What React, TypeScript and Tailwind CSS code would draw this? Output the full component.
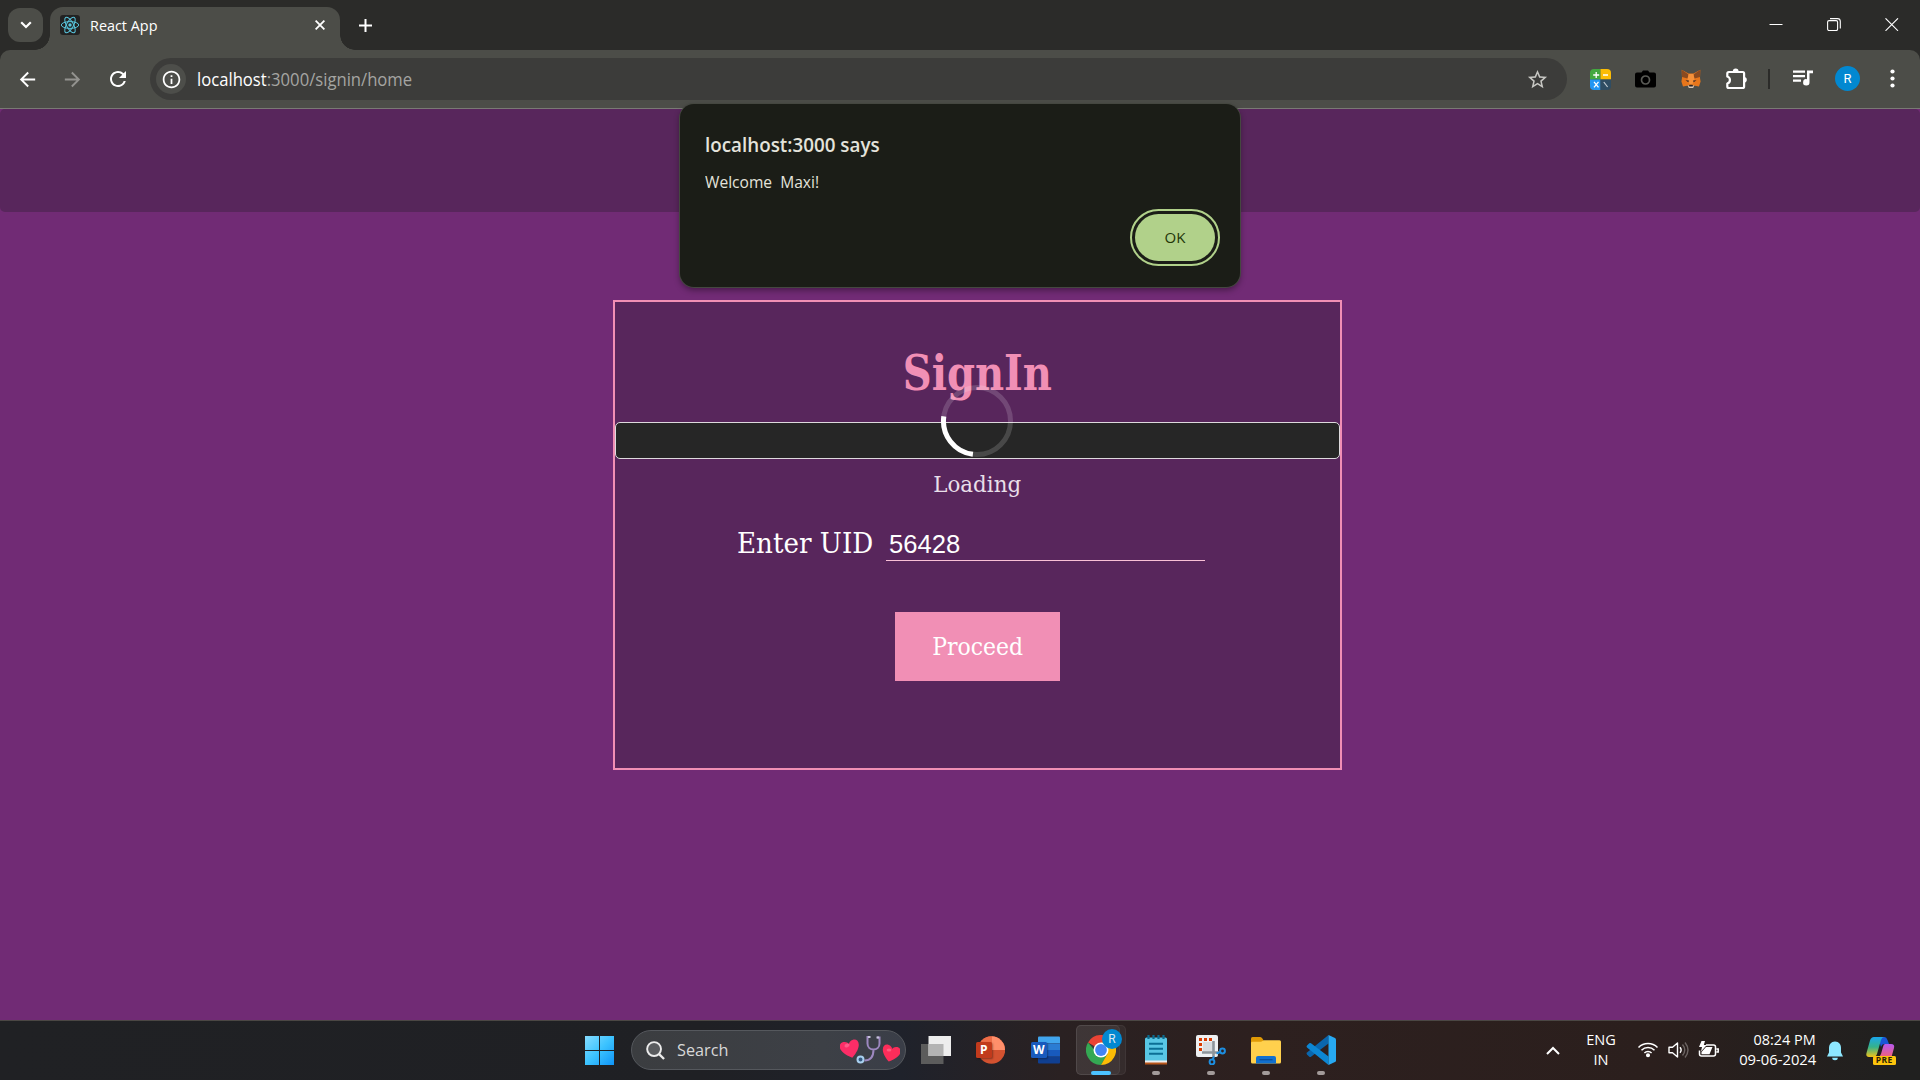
import type { ReactNode } from "react";
import { MdArrowBack, MdArrowForward, MdRefresh, MdInfoOutline, MdStarBorder } from "react-icons/md";

function ToolCell({ children }: { children: ReactNode }) {
  return <div className="flex w-[45px] shrink-0 items-center justify-center">{children}</div>;
}

function ReactLogo() {
  return (
    <svg width="20" height="20" viewBox="0 0 20 20" className="rounded-[3px] bg-[#222]" fill="none" stroke="#58c4dc" strokeWidth="1">
      <ellipse cx="10" cy="10" rx="8.7" ry="3.4" />
      <ellipse cx="10" cy="10" rx="8.7" ry="3.4" transform="rotate(60 10 10)" />
      <ellipse cx="10" cy="10" rx="8.7" ry="3.4" transform="rotate(120 10 10)" />
      <circle cx="10" cy="10" r="1.7" fill="#58c4dc" stroke="none" />
    </svg>
  );
}

function TabStrip() {
  return (
    <div className="flex h-[50px] bg-[#2b2b29]">
      <div className="mt-2 ml-2 flex h-[34px] w-[35px] items-center justify-center rounded-xl bg-[#4c4d48]">
        <svg width="12" height="8" viewBox="0 0 12 8" fill="none" stroke="#fff" strokeWidth="2.2">
          <path d="M1.2 1.2 6 6l4.800-4.800" />
        </svg>
      </div>
      <div className="relative mt-[7px] ml-[7px] flex w-[290px] items-center rounded-t-[13px] bg-[#4c4d48] pb-[7px] pl-[10px]">
        <span className="absolute bottom-0 -left-[15px] size-[15px] bg-[radial-gradient(circle_at_0_0,transparent_14.5px,#4c4d48_15px)]" />
        <span className="absolute -right-[15px] bottom-0 size-[15px] bg-[radial-gradient(circle_at_100%_0,transparent_14.5px,#4c4d48_15px)]" />
        <ReactLogo />
        <span className="ml-[10px] origin-left scale-x-[0.96] text-[15px] leading-5 text-white">React App</span>
        <svg className="mr-[15px] ml-auto" width="10" height="10" viewBox="0 0 10 10" stroke="#fff" strokeWidth="1.8">
          <path d="M.6.6l8.800 8.800M9.400.6.6 9.400" />
        </svg>
      </div>
      <svg className="mt-[19px] ml-[19px]" width="13" height="13" viewBox="0 0 13 13" stroke="#fff" strokeWidth="2">
        <path d="M0 6.500h13M6.500 0v13" />
      </svg>
      <div className="mt-[18px] mr-[21px] ml-auto flex gap-[44px]">
        <svg width="14" height="13" viewBox="0 0 14 13" stroke="#fff">
          <path d="M.5 6.500h13" />
        </svg>
        <svg width="14" height="13" viewBox="0 0 14 13" fill="none" stroke="#fff" strokeWidth="1.100">
          <rect x=".6" y="2.600" width="10" height="10" rx="1.500" />
          <path d="M3 .6h7.500a2.800 2.800 0 0 1 2.800 2.800v7" />
        </svg>
        <svg width="14" height="13" viewBox="0 0 14 13" stroke="#fff" strokeWidth="1.100">
          <path d="M.5.300l12.500 12.500M13 .300.5 12.800" />
        </svg>
      </div>
    </div>
  );
}

function CalculatorIcon() {
  return (
    <svg width="21" height="21" viewBox="0 0 21 21" className="rounded-[4px]">
      <path fill="#43a83f" d="M0 0h10.500v10.500H0z" />
      <path fill="#fbbc05" d="M10.500 0H21v10.500H10.500z" />
      <path fill="#2196f3" d="M0 10.500h10.500V21H0z" />
      <path fill="#2f4d63" d="M10.500 10.500H21V21H10.500z" />
      <path stroke="#fff" strokeWidth="1.300" d="M3.200 6h6M6.200 3v6M13 6h5M4 12.800l4.500 5.500M8.500 12.800 4 18.300" />
      <path stroke="#c3ccd3" strokeWidth="1.200" d="m13.800 13 3.800 5" />
    </svg>
  );
}

function CameraIcon() {
  return (
    <svg width="21" height="18" viewBox="0 0 21 18">
      <path d="M6.500 2.500 8 .500h5l1.500 2H19a2 2 0 0 1 2 2v11a2 2 0 0 1-2 2H2a2 2 0 0 1-2-2v-11a2 2 0 0 1 2-2z" />
      <circle cx="10.500" cy="10" r="4" fill="none" stroke="#5a5b56" strokeWidth="1.700" />
    </svg>
  );
}

function FoxIcon() {
  return (
    <svg width="20" height="20" viewBox="0 0 20 20">
      <path fill="#e8761b" d="M.7.800 7.500 4.500h5L19.300.800 19 9l.600 3.500-1.600 5-5.500-1-1.200 2H8.700l-1.200-2-5.500 1-1.600-5L1 9z" />
      <path fill="#8a4a20" d="M.7.800 7.600 5.500 6.500 9.500 1 8zM19.300.800l-6.900 4.700 1.100 4L19 8z" />
      <path fill="#f5913a" d="M7.600 5h4.800l1.100 5.500-2.200 5H8.700l-2.200-5z" />
      <path fill="#3c2a28" d="m4.500 11.200 3.500.300-.700 1.700zM15.500 11.200l-3.500.300.700 1.700zM8.500 16h3l.5 1.700H8z" />
      <path fill="#d9c7b6" d="m6.500 15.800 1.600 1.200h3.800l1.600-1.200-1.300 3.200H7.800z" />
      <path fill="#2b2322" d="M8.600 15.700h2.800l.4 1.800H8.200z" />
    </svg>
  );
}

function Toolbar() {
  return (
    <div className="bg-[#2b2b29]">
      <div className="flex h-[59px] items-center rounded-t-[10px] border-b border-[#797a74] bg-[#4c4d48] pl-[5px]">
        <ToolCell><MdArrowBack size={23} color="#fff" /></ToolCell>
        <ToolCell><MdArrowForward size={23} color="#93938f" /></ToolCell>
        <ToolCell><MdRefresh size={24} color="#fff" className="mb-px" /></ToolCell>
        <div className="ml-[10px] flex h-[42px] w-[1417px] items-center rounded-full bg-[#3c3c3a] pl-1.5">
          <div className="flex size-[30px] items-center justify-center rounded-full bg-[#4d4e4a]">
            <MdInfoOutline size={21} color="#fff" />
          </div>
          <span className="ml-[10.500px] origin-left scale-x-[0.951] text-[17.5px] leading-6 text-[#a5a5a2]">
            <span className="text-white">localhost</span>:3000/signin/home
          </span>
          <MdStarBorder className="mr-[18px] ml-auto" size={23} color="#c7c7c3" />
        </div>
        <div className="w-[11px]" />
        <ToolCell><CalculatorIcon /></ToolCell>
        <ToolCell><CameraIcon /></ToolCell>
        <ToolCell><FoxIcon /></ToolCell>
        <ToolCell>
          <svg width="22" height="22" viewBox="0 0 22 22" fill="none" stroke="#fff" strokeWidth="2.200" strokeLinejoin="round" className="mb-px">
            <path d="M2.300 5.500q0-1.500 1.500-1.500h14q1.300 0 1.300 1.500V18.500q0 1.500-1.500 1.500H3.800q-1.500 0-1.500-1.500V15.500C5.800 14.500 5.800 9.500 2.300 8.500z" />
            <path fill="#fff" stroke="none" d="M7.800 3.500a2.900 2.900 0 0 1 5.800 0zM19 9a2.800 2.800 0 0 1 0 5.600z" />
          </svg>
        </ToolCell>
        <div className="flex w-[22px] justify-center"><div className="h-5 w-0.5 bg-[#2b2b29]" /></div>
        <ToolCell>
          <svg width="20" height="16" viewBox="0 0 20 16" fill="#fff" className="mb-0.5">
            <path d="M0 .500h12v2.200H0zM0 5h12v2.200H0zM0 9.500h8v2.200H0zM14 .500h6v2.700h-3.500v9a3.200 3.200 0 1 1-2.500-3z" />
          </svg>
        </ToolCell>
        <ToolCell>
          <div className="mb-px flex size-[25px] items-center justify-center rounded-full bg-[#0288d1] font-['Roboto'] text-[13px] leading-none text-white">R</div>
        </ToolCell>
        <ToolCell>
          <svg width="5" height="19" viewBox="0 0 5 19" fill="#fff" className="mb-px">
            <circle cx="2.500" cy="2.500" r="2.100" /><circle cx="2.500" cy="9.500" r="2.100" /><circle cx="2.500" cy="16.500" r="2.100" />
          </svg>
        </ToolCell>
      </div>
    </div>
  );
}

function AlertDialog() {
  return (
    <div className="absolute top-[104px] left-[680px] h-[183px] w-[560px] rounded-[14px] bg-[#1b1d17] pt-7 pl-[25px] text-[#e4e3db] shadow-[0_3px_6px_rgba(0,0,0,0.4)] ring-1 ring-[#454740]">
      <div className="origin-left scale-x-[0.99] text-[19px] leading-[26px] font-semibold">localhost:3000 says</div>
      <div className="mt-[14px] origin-left scale-x-[1.005] text-[15.5px] leading-5 whitespace-pre">Welcome  Maxi!</div>
      <button className="absolute top-[110px] left-[455px] flex h-[47px] w-20 items-center justify-center rounded-full bg-[#b1d18a] text-[15px] font-medium text-[#233608] outline-2 outline-offset-[3px] outline-[#b1d18a]">
        OK
      </button>
    </div>
  );
}

function Spinner() {
  return (
    <svg className="absolute -top-[39px] left-[324px]" width="74" height="74" viewBox="-37 -37 74 74" fill="none" strokeWidth="5">
      <circle r="33.500" stroke="#fff" strokeOpacity="0.16" />
      <path d="M-33.200-4.600A33.500 33.500 0 0 0-4.100 33.250" stroke="#fff" />
    </svg>
  );
}

function SignInCard() {
  return (
    <div className="mt-[88px] ml-[613px] flex h-[470px] w-[729px] flex-col items-center border-2 border-[#f18fb5] bg-[#58265c] font-['DejaVu_Serif',serif] text-white">
      <h1 className="mt-[41px] scale-x-[0.835] text-[48px] leading-[60px] font-bold text-[#f18fb5]">SignIn</h1>
      <div className="relative mt-[19px] h-[37px] w-full rounded-[5px] border border-[#ddd9dd] bg-[#262626]">
        <Spinner />
      </div>
      <div className="mt-[10px] scale-x-[0.95] text-[22.5px] leading-[30px] text-[#e8dfe9]">Loading</div>
      <div className="mt-[26px] flex w-full">
        <label className="ml-[122px] w-[149px] origin-left scale-x-[0.97] pt-px text-[27px] leading-9 whitespace-nowrap">Enter UID</label>
        <div className="h-9 w-[319px] border-b border-[#f9c0d6] pl-[3px] font-['Liberation_Sans',sans-serif] text-[25.6px] leading-[38px]">56428</div>
      </div>
      <div className="mt-[50px] flex h-[69px] w-[165px] items-center justify-center bg-[#f18fb5] pt-[3px] text-[23.5px]">
        <span className="scale-x-[0.935]">Proceed</span>
      </div>
    </div>
  );
}

function WindowsLogo() {
  return (
    <svg width="29" height="29" viewBox="0 0 29 29">
      <defs>
        <linearGradient id="win" x1="0" y1="0" x2="1" y2="1" gradientUnits="objectBoundingBox">
          <stop offset="0" stopColor="#86dcff" /><stop offset=".5" stopColor="#3cc3ff" /><stop offset="1" stopColor="#0f94f7" />
        </linearGradient>
      </defs>
      <path fill="url(#win)" d="M0 0h14v14H0zM15 0h14v14H15zM0 15h14v14H0zM15 15h14v14H15z" />
    </svg>
  );
}

function SearchDecoration() {
  return (
    <svg width="60" height="30" viewBox="0 0 60 30" className="mr-[5px] ml-auto" fill="none">
      <path transform="translate(10 13.500) rotate(-14) scale(1.120)" fill="#fc2d67" d="M0 8.500C-12 0-9.500-7-4.500-7 -1.800-7 0-4.800 0-4 0-4.800 1.800-7 4.500-7 9.500-7 12 0 0 8.500z" />
      <path transform="translate(51 18) rotate(15) scale(1.050)" fill="#fc2d5a" d="M0 8.500C-12 0-9.500-7-4.500-7 -1.800-7 0-4.800 0-4 0-4.800 1.800-7 4.500-7 9.500-7 12 0 0 8.500z" />
      <ellipse cx="7" cy="10.500" rx="2.600" ry="1.800" fill="#ff7aa0" opacity=".6" transform="rotate(-20 7 10.500)" />
      <ellipse cx="49" cy="15" rx="2.400" ry="1.600" fill="#ff7a95" opacity=".6" />
      <path stroke="#9d88c0" strokeWidth="2" d="M30 2h-2.500v6.500c0 8 12 8 12 0V2.500H37M33.500 14.500c0 7-2.500 11-9 11" />
      <path stroke="#c5c1da" strokeWidth="2.200" d="M28 2h2.500M36.500 2.500H39" />
      <circle cx="20.500" cy="24.500" r="3" fill="#355a80" stroke="#a9d0ef" strokeWidth="2" />
    </svg>
  );
}

function TaskSlot({ children, running }: { children: ReactNode; running?: boolean }) {
  return (
    <div className="relative flex h-[59px] w-[55px] items-center justify-center">
      {children}
      {running && <span className="absolute bottom-[5px] left-6 h-1 w-2 rounded-full bg-[#a39b9a]" />}
    </div>
  );
}

function OfficeBadge({ letter, tone }: { letter: string; tone: "red" | "blue" }) {
  return (
    <span className={`absolute top-[21px] left-[13px] flex size-[15.5px] items-center justify-center rounded-[1.500px] text-[12px] leading-none font-bold text-white shadow-[1px_1px_2px_rgba(0,0,0,0.35)] ${tone === "red" ? "bg-[#c13a1c]" : "bg-[#185abd]"}`}>
      {letter}
    </span>
  );
}

function Taskbar() {
  return (
    <div className="flex h-[60px] items-center border-t border-[#4b4744] bg-[linear-gradient(90deg,#202124_0px,#1f2024_700px,#1f222b_900px,#2a2122_1060px,#2d201f_1250px,#2b1f1d_1650px,#20201f_1900px)]">
      <div className="w-[585px]" />
      <WindowsLogo />
      <div className="mb-px ml-[17px] flex h-10 w-[275px] items-center rounded-full border border-[#55585d] bg-[linear-gradient(90deg,#3b3d40,#3d4046_70%,#3a3e48)] pl-[14px]">
        <svg width="19" height="19" viewBox="0 0 20 20" fill="none" stroke="#ececec" strokeWidth="2">
          <circle cx="8.500" cy="8.500" r="7.300" fill="#5a5c5f" /><path d="m13.800 13.800 5.200 5.200" strokeWidth="2.400" />
        </svg>
        <span className="ml-3 origin-left scale-x-[0.955] text-[17px] text-[#d8d8d8]">Search</span>
        <SearchDecoration />
      </div>
      <div className="ml-[2px] flex">
        <TaskSlot>
          <svg width="30" height="28" viewBox="0 0 30 28" className="mb-px">
            <path fill="#5c5c5c" d="M0 8h22.500v20H0z" /><path fill="#ededed" d="M7.500 0H30v20H7.500z" /><path fill="#b3b3b3" d="M7.500 8h15v12h-15z" />
          </svg>
        </TaskSlot>
        <TaskSlot>
          <svg width="29" height="28" viewBox="0 0 29 28" className="mb-px">
            <circle cx="15.500" cy="14" r="13.700" fill="#d35230" /><path fill="#ff8f6b" d="M15.500.3A13.700 13.700 0 0 1 29 14H15.500z" /><path fill="#ed6c47" d="M15.500.3A13.700 13.700 0 0 0 1.800 14h13.700z" />
          </svg>
          <OfficeBadge letter="P" tone="red" />
        </TaskSlot>
        <TaskSlot>
          <svg width="29" height="28" viewBox="0 0 29 28" className="mb-px">
            <path fill="#41a5ee" d="M7 1.500Q7 .500 8 .500h20q1 0 1 1V7.300H7z" /><path fill="#2b7cd3" d="M7 7.300h22V14H7z" /><path fill="#185abd" d="M7 14h22v6.700H7z" /><path fill="#103f91" d="M7 20.700h22v5.800q0 1-1 1H8q-1 0-1-1z" />
          </svg>
          <OfficeBadge letter="W" tone="blue" />
        </TaskSlot>
        <TaskSlot>
          <span className="absolute top-1 left-[3px] h-[50px] w-[50px] rounded-[5px] border border-white/5 bg-white/5" />
          <span className="absolute top-1 left-[3px] h-[50px] w-[44px] rounded-[5px] border border-white/5 bg-white/5" />
          <svg className="absolute top-[14px] left-[13px]" width="30" height="30" viewBox="0 0 30 30">
            <path fill="#ea4335" d="M15 15 2 7.500a15 15 0 0 1 26 0z" />
            <path fill="#34a853" d="M15 22.500 2 7.500A15 15 0 0 0 15 30l6.500-11z" />
            <path fill="#fbbc05" d="M15 7.500h13A15 15 0 0 1 15 30l6.500-11.300z" />
            <circle cx="15" cy="15" r="7.500" fill="#fff" /><circle cx="15" cy="15" r="5.900" fill="#4285f4" />
          </svg>
          <span className="absolute top-[8px] left-[29px] flex size-5 items-center justify-center rounded-full bg-[#0288d1] font-['Roboto'] text-[12px] leading-none text-[#dbe9f3]">R</span>
          <span className="absolute bottom-[5px] left-[18px] h-1 w-5 rounded-full bg-[#4cc2ff]" />
        </TaskSlot>
        <TaskSlot running>
          <svg width="22" height="30" viewBox="0 0 22 30" className="mb-px">
            <path fill="#b8561b" d="M0 26h22v3.500H0z" /><path fill="#eceff0" d="M0 22h22v5.500H0z" /><path fill="#58c6e4" d="M0 4q0-1.500 1.500-1.500h19Q22 2.500 22 4v21.500H0z" />
            <path stroke="#0b6f95" strokeWidth="2" d="M4 8.800h14M4 13.800h14M4 18.800h14" /><path stroke="#0a6c90" strokeWidth="2.200" d="M3.500 0v4M8.500 0v4M13.500 0v4M18.500 0v4" />
          </svg>
        </TaskSlot>
        <TaskSlot running>
          <svg width="30" height="30" viewBox="0 0 30 30" fill="none" className="mb-px">
            <rect width="22" height="22" rx="2" fill="#eef0f2" /><path fill="#d9dcdf" d="M7 7h11v11H7z" />
            <path stroke="#d83b01" strokeWidth="3" strokeDasharray="3 2" d="M3 4.500h13M4.500 8v10" />
            <path stroke="#8e959b" strokeWidth="2.600" d="M17.500 6v16M6 17.500h17" />
            <circle cx="26.500" cy="16" r="2.400" stroke="#1d8ee0" strokeWidth="2" /><circle cx="16" cy="27" r="2.400" stroke="#1d8ee0" strokeWidth="2" />
            <path stroke="#1d8ee0" strokeWidth="2" d="m20.500 18.500 4-1.500M18 21.500l-1.500 3.500" />
          </svg>
        </TaskSlot>
        <TaskSlot running>
          <svg width="30" height="27" viewBox="0 0 30 27">
            <path fill="#e09a06" d="M0 1.500Q0 0 1.500 0H9q1 0 2 1l2 3v4H0z" /><path fill="#ffd04d" d="M0 6q0-1.200 1.200-1.200H10L13 3.200h15.500Q30 3.200 30 4.700V25q0 1.500-1.500 1.500h-27Q0 26.500 0 25z" />
            <path fill="#1170cf" d="M5 26.500V21q0-2 2-2h16q2 0 2 2v5.500z" /><path stroke="#0a4f9b" strokeWidth="1.300" d="M8.500 22.700h13" />
          </svg>
        </TaskSlot>
        <TaskSlot running>
          <svg width="30" height="30" viewBox="0 0 30 30" className="mb-px">
            <path fill="#0a66ad" d="m1 19.500 2.300 2.300q.8.600 1.700 0L22.500 8.500V0L1 17.500q-1 1 0 2z" />
            <path fill="#0c86d3" d="m1 10.500 2.300-2.300q.8-.6 1.700 0L22.500 21.500V30L1 12.500q-1-1 0-2z" />
            <path fill="#27a9f2" d="M22.500 0 29 3q1 .5 1 1.500v21q0 1-1 1.500l-6.500 3z" />
          </svg>
        </TaskSlot>
      </div>
      <div className="mb-[3px] ml-auto flex w-[390px] items-center text-[15px] leading-5 text-white">
        <div className="flex w-[46px] justify-center">
          <svg width="14" height="9" viewBox="0 0 14 9" fill="none" stroke="#fff" strokeWidth="2" className="mt-[3px]"><path d="m1 8 6-6 6 6" /></svg>
        </div>
        <div className="flex w-[50px] scale-x-[0.97] flex-col items-center"><span>ENG</span><span>IN</span></div>
        <div className="mt-px ml-[11px] flex w-[82px] items-center justify-between">
          <svg width="22" height="17" viewBox="0 0 22 17" fill="none" stroke="#fff" strokeWidth="1.500">
            <path d="M1.500 6.500a13.400 13.400 0 0 1 19 0M4.500 9.300a9.200 9.200 0 0 1 13 0M7.400 12a5.100 5.100 0 0 1 7.200 0" /><circle cx="11" cy="14.300" r="1.300" fill="#fff" />
          </svg>
          <svg width="21" height="18" viewBox="0 0 21 18" fill="none" stroke="#fff" strokeWidth="1.400">
            <path d="M1 6.200h3.500L9.500 2v14l-5-4.200H1z" strokeLinejoin="round" /><path d="M12 6.200q2.300 2.800 0 5.600" /><path d="M14.500 3.500q4.500 5.500 0 11M17 1.500q6 7.500 0 15" stroke="#6b6361" />
          </svg>
          <svg width="21" height="17" viewBox="0 0 21 17" fill="none" stroke="#fff" strokeWidth="1.500">
            <path d="M8 4h7.500q2 0 2 2v7q0 2-2 2H3.500q-2 0-2-2V9.500M18.500 8h1.700v3h-1.700" /><path fill="#fff" stroke="none" d="M3.500 0 7 0 5.800 4h3L3 10.500 4 6H1zM3.500 13.300V11L8 6h6.500l-3 7.300z" />
          </svg>
        </div>
        <div className="ml-[17px] flex w-[80px] shrink-0 flex-col items-end whitespace-nowrap">
          <span className="origin-right scale-x-[0.96]">08:24 PM</span>
          <span className="origin-right scale-x-[0.985]">09-06-2024</span>
        </div>
        <svg className="mt-[3px] ml-[11px]" width="16" height="20" viewBox="0 0 16 20" fill="#8de7ff">
          <path d="M8 .500c4 0 6 3 6 6.500v4.500l2 4H0l2-4V7C2 3.500 4 .500 8 .500zM5.200 16.800h5.600a2.800 2.500 0 0 1-5.600 0z" />
        </svg>
        <div className="relative mt-[3px] ml-[23px] h-7 w-[30px]">
          <svg width="30" height="28" viewBox="0 0 30 28">
            <defs>
              <linearGradient id="cpA" x1="0" y1="0" x2="0" y2="1"><stop offset="0" stopColor="#1aa7ec" /><stop offset=".5" stopColor="#35b28a" /><stop offset="1" stopColor="#f0c419" /></linearGradient>
              <linearGradient id="cpB" x1="0" y1="0" x2="0" y2="1"><stop offset="0" stopColor="#b659f0" /><stop offset="1" stopColor="#f2617a" /></linearGradient>
            </defs>
            <path fill="#1a56d6" d="M12 0h6.500q2 0 3 3l1.500 4h-5q-2 0-3 3z" />
            <path fill="url(#cpA)" d="M8 0h10q-2 0-3 3l-4 14q-1 3-4 3H3q-3.500 0-2.500-4L4 3.500Q5 0 8 0z" />
            <path fill="url(#cpB)" d="M19 7h6q4 0 3 4l-2.500 9H12q2 0 3-3l2-7q.5-3 2-3z" />
          </svg>
          <span className="absolute top-[19px] left-[7px] flex h-[9px] w-[22.500px] items-center justify-center rounded-[1.500px] bg-[#fcc40c] text-[8.500px] leading-none font-bold tracking-[0.5px] text-[#2a1f05]">PRE</span>
        </div>
      </div>
    </div>
  );
}

export default function App() {
  return (
    <div className="relative flex h-[1080px] w-[1920px] flex-col overflow-hidden bg-[#712b75] font-['Open_Sans','Noto_Sans',sans-serif]">
      <TabStrip />
      <Toolbar />
      <main className="flex-1">
        <div className="h-[103px] rounded-[5px] bg-[#58265c]" />
        <SignInCard />
      </main>
      <Taskbar />
      <AlertDialog />
    </div>
  );
}
